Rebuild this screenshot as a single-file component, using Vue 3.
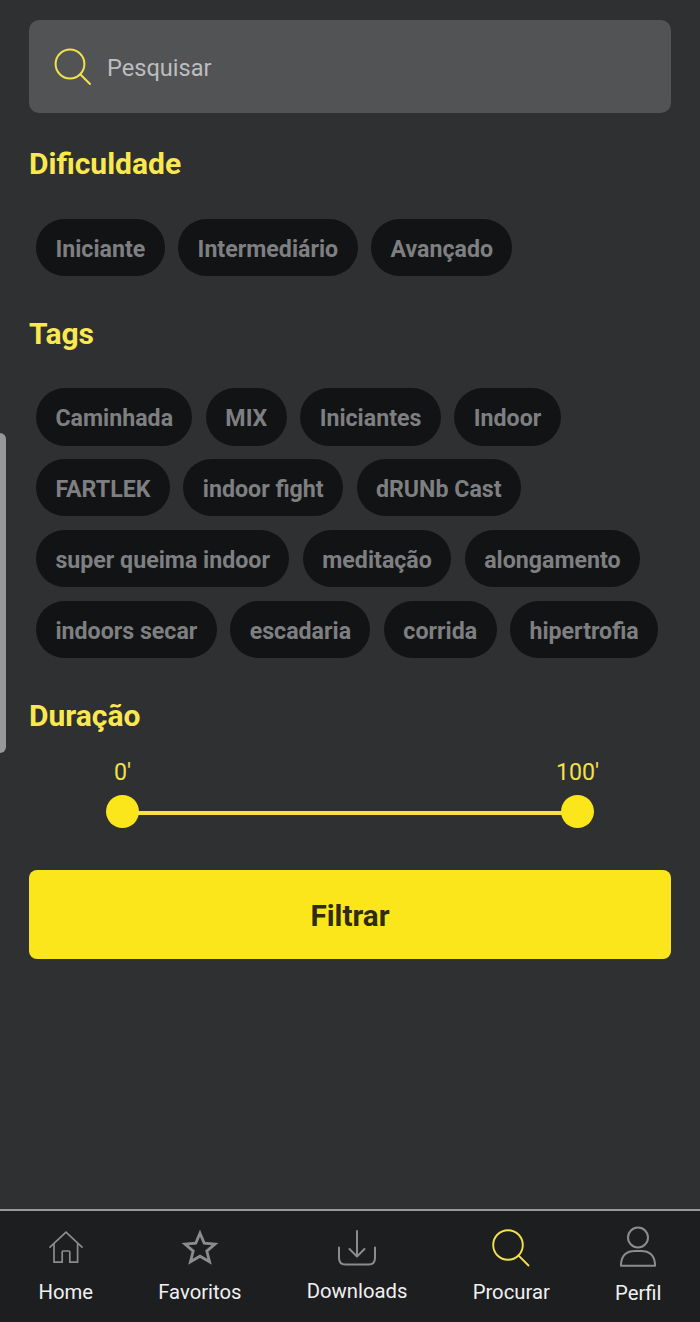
<template>
  <div class="search-page">
    <!-- Painel lateral do sistema -->
    <div class="edge-handle"></div>

    <main class="content">
      <label class="search-box">
        <svg class="search-icon" viewBox="0 0 38 38">
          <circle cx="16" cy="16" r="14.4" />
          <path d="M26.2 26.2 L36 36" />
        </svg>
        <input v-model="query" type="text" placeholder="Pesquisar" />
      </label>

      <h2>Dificuldade</h2>
      <div class="chips">
        <button
          v-for="level in levels"
          :key="level"
          class="chip"
          :class="{ selected: selectedLevel === level }"
          @click="toggleLevel(level)"
        >{{ level }}</button>
      </div>

      <h2>Tags</h2>
      <div class="chips">
        <button
          v-for="tag in tags"
          :key="tag"
          class="chip"
          :class="{ selected: selectedTags.includes(tag) }"
          @click="toggleTag(tag)"
        >{{ tag }}</button>
      </div>

      <h2 class="duration-title">Duração</h2>
      <div class="duration">
        <div class="end">
          <span class="value">{{ duration[0] }}'</span>
          <span class="thumb"></span>
        </div>
        <div class="track"></div>
        <div class="end">
          <span class="value">{{ duration[1] }}'</span>
          <span class="thumb"></span>
        </div>
      </div>

      <button class="filter-btn">Filtrar</button>
    </main>

    <nav class="tab-bar">
      <a class="tab home">
        <svg width="36" height="36" viewBox="0 0 36 36" stroke-width="1.7">
          <path d="M2 18.2 L18 3.2 L34 18.2" />
          <path d="M6 15 V33.2 H14.2 V23 Q14.2 22 15.2 22 H20.8 Q21.8 22 21.8 23 V33.2 H29.6 V15" />
        </svg>
        <span>Home</span>
      </a>
      <a class="tab favorites">
        <svg width="40" height="38" viewBox="0 0 40 38" stroke-width="2.8" class="sharp">
          <path d="M20 4.2 L24.2 14.1 L35 15 L26.8 22.1 L29.6 32.8 L20 27.2 L10.4 32.8 L13.2 22.1 L5 15 L15.8 14.1 Z" />
        </svg>
        <span>Favoritos</span>
      </a>
      <a class="tab downloads">
        <svg width="40" height="38" viewBox="0 0 40 38" stroke-width="2">
          <path d="M20 2 V27 M12.5 20 L20 27.5 L27.5 20" />
          <path d="M2 18.5 V29 Q2 35.5 8.5 35.5 H31.5 Q38 35.5 38 29 V18.5" />
        </svg>
        <span>Downloads</span>
      </a>
      <a class="tab search active">
        <svg width="38" height="38" viewBox="0 0 38 38" stroke-width="1.9">
          <circle cx="16" cy="16" r="14.8" />
          <path d="M26.4 26.4 L36.5 36.5" />
        </svg>
        <span>Procurar</span>
      </a>
      <a class="tab profile">
        <svg width="38" height="42" viewBox="0 0 38 42" stroke-width="2">
          <circle cx="19" cy="11.5" r="10" />
          <path d="M2 39.8 V38 Q3 25 16 25 H22 Q35 25 36 38 V39.8 Z" />
        </svg>
        <span>Perfil</span>
      </a>
    </nav>
  </div>
</template>

<script setup>
import { ref } from "vue";

const levels = ["Iniciante", "Intermediário", "Avançado"];
const tags = [
  "Caminhada", "MIX", "Iniciantes", "Indoor",
  "FARTLEK", "indoor fight", "dRUNb Cast",
  "super queima indoor", "meditação", "alongamento",
  "indoors secar", "escadaria", "corrida", "hipertrofia",
];

const query = ref("");
const selectedLevel = ref("");
const selectedTags = ref([]);
const duration = ref([0, 100]);

function toggleLevel(level) {
  selectedLevel.value = selectedLevel.value === level ? "" : level;
}

function toggleTag(tag) {
  const i = selectedTags.value.indexOf(tag);
  if (i >= 0) selectedTags.value.splice(i, 1);
  else selectedTags.value.push(tag);
}
</script>

<style>
body { margin: 0; background: #2f3032; }
</style>

<style scoped>
* { box-sizing: border-box; }

.search-page {
  position: relative; height: 1322px; background: #2f3032;
  display: flex; flex-direction: column;
  font-family: Roboto, "Liberation Sans", sans-serif;
}
svg { fill: none; stroke: currentColor; stroke-linecap: round; stroke-linejoin: round; flex: none; }
svg.sharp { stroke-linejoin: miter; }
button, input { font-family: inherit; border: none; }

.edge-handle {
  position: absolute; left: 0; top: 433px; width: 6px; height: 320px;
  background: #97989a; border-radius: 0 6px 6px 0;
}

.content { flex: 1; padding: 19.5px 29px 0; }

/* Busca */
.search-box {
  display: flex; align-items: center; height: 93.5px; padding-left: 25px;
  background: #525355; border-radius: 10px;
}
.search-icon { width: 38px; height: 38px; margin-top: 1px; color: #f3e14c; stroke-width: 2; }
.search-box input {
  flex: 1; margin-left: 15px; padding: 3px 0 0; background: transparent; outline: none;
  color: #fff; font-size: 23.6px;
}
.search-box input::placeholder { color: #bcbdbf; opacity: 1; }

h2 {
  margin: 33px 0 36.5px; height: 36px; line-height: 36px;
  font-size: 30px; font-weight: 700; color: #fbe850;
}

/* Filtros */
.chips { display: flex; flex-wrap: wrap; gap: 13.5px; margin-bottom: 40px; padding-left: 7px; }
.chip {
  height: 57.3px; padding: 3px 19.4px 0; border-radius: 29px;
  background: #121315; color: #7e7f81; font-size: 23.2px; font-weight: 700;
}
.chip.selected { background: #fbe61c; color: #2f3032; }

/* Duração */
.duration-title { margin-bottom: 24px; }
.duration { display: flex; align-items: flex-end; padding: 0 77px; color: #f3e14c; }
.end { display: flex; flex-direction: column; align-items: center; width: 33px; }
.value { height: 28px; line-height: 28px; font-size: 23.2px; white-space: nowrap; }
.thumb { width: 33px; height: 33px; margin-top: 9px; border-radius: 50%; background: #fbe61c; }
.track { flex: 1; height: 4px; margin: 0 -2px 13px; background: #f9e142; }

.filter-btn {
  display: block; width: 100%; height: 89px; margin-top: 42px; padding-top: 4px;
  border-radius: 8px; background: #fbe61c; color: #2f2c12; font-size: 29.6px; font-weight: 700;
}

/* Menu inferior */
.tab-bar {
  display: flex; justify-content: space-between; height: 113px; padding: 0 38.5px;
  border-top: 2px solid #97999b; background: #1d1e20;
}
.tab { display: flex; flex-direction: column; align-items: center; padding-top: 18px; color: #8b8c8e; }
.tab span { height: 24px; line-height: 24px; margin-top: auto; margin-bottom: 18px; font-size: 20.3px; color: #f0f0f1; }
.tab.active { color: #f3e14c; }
.tab.downloads span { margin-bottom: 19px; }
.tab.profile { padding-top: 15px; }
.tab.profile span { margin-bottom: 17px; }
</style>
